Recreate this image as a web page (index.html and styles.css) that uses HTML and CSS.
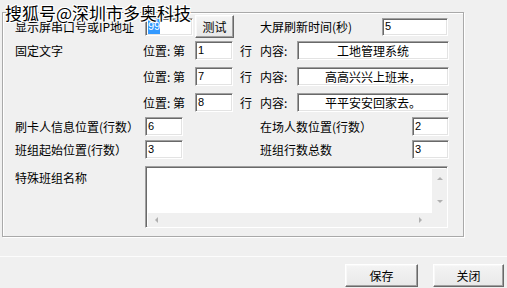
FILE: index.html
```html
<!DOCTYPE html>
<html lang="zh-CN">
<head>
<meta charset="utf-8">
<title>串口设置</title>
<link rel="stylesheet" href="styles.css">
</head>
<body>
<div class="dialog">
  <div class="group">
    <div class="row r0">
      <div class="lbl w130">显示屏串口号或IP地址</div>
      <div class="field port"><span class="sel">99</span></div>
      <div class="btn btn-test">测试</div>
      <div class="lbl lbl-refresh">大屏刷新时间(秒)</div>
      <div class="field refresh"><span class="num">5</span></div>
    </div>
    <div class="row r1">
      <div class="lbl w128">固定文字</div>
      <div class="lbl pos">位置:&nbsp;第</div>
      <div class="field line-no"><span class="num">1</span></div>
      <div class="lbl hang">行</div>
      <div class="lbl neirong">内容:</div>
      <div class="field content">工地管理系统</div>
    </div>
    <div class="row r2">
      <div class="lbl w128"></div>
      <div class="lbl pos">位置:&nbsp;第</div>
      <div class="field line-no"><span class="num">7</span></div>
      <div class="lbl hang">行</div>
      <div class="lbl neirong">内容:</div>
      <div class="field content">高高兴兴上班来，</div>
    </div>
    <div class="row r2">
      <div class="lbl w128"></div>
      <div class="lbl pos">位置:&nbsp;第</div>
      <div class="field line-no"><span class="num">8</span></div>
      <div class="lbl hang">行</div>
      <div class="lbl neirong">内容:</div>
      <div class="field content">平平安安回家去。</div>
    </div>
    <div class="row r4">
      <div class="lbl w130">刷卡人信息位置(行数）</div>
      <div class="field small"><span class="num">6</span></div>
      <div class="lbl lbl-right">在场人数位置(行数）</div>
      <div class="field small2"><span class="num">2</span></div>
    </div>
    <div class="row r5">
      <div class="lbl w130">班组起始位置(行数）</div>
      <div class="field small"><span class="num">3</span></div>
      <div class="lbl lbl-right">班组行数总数</div>
      <div class="field small2"><span class="num">3</span></div>
    </div>
    <div class="row r6">
      <div class="lbl w130 lbl-list">特殊班组名称</div>
      <div class="field list">
        <div class="list-body"></div>
        <div class="vscroll">
          <svg width="16" height="10" viewBox="0 0 16 10"><polygon points="5,7 11,7 8,4" fill="#b0b0b0"/></svg>
          <svg width="16" height="10" viewBox="0 0 16 10"><polygon points="5,3 11,3 8,6" fill="#b0b0b0"/></svg>
        </div>
        <div class="hscroll">
          <svg width="10" height="14" viewBox="0 0 10 14"><polygon points="7,4 7,10 4,7" fill="#b0b0b0"/></svg>
          <svg width="10" height="14" viewBox="0 0 10 14"><polygon points="3,4 3,10 6,7" fill="#b0b0b0"/></svg>
        </div>
        <div class="corner"></div>
      </div>
    </div>
  </div>
  <div class="sep"></div>
  <div class="actions">
    <div class="btn btn-save">保存</div>
    <div class="btn btn-close">关闭</div>
  </div>
  <div class="watermark">搜狐号@深圳市多奥科技</div>
</div>
</body>
</html>
```

FILE: styles.css
```css
html, body {
  margin: 0;
  padding: 0;
  background: #f0f0f0;
}

.dialog {
  position: relative;
  width: 507px;
  height: 288px;
  overflow: hidden;
  background: #f0f0f0;
  font-family: "Noto Sans CJK SC", "Liberation Sans", sans-serif;
  font-size: 12px;
  line-height: 14px;
  color: #000;
}

.group {
  box-sizing: border-box;
  margin: 12px 0 0 2px;
  width: 462px;
  height: 225px;
  border: 1px solid #a9a9a9;
  box-shadow: 1px 1px 0 #fff, inset 1px 1px 0 #fff;
}

.row {
  display: flex;
  align-items: center;
  margin-left: 12px;
}

.r0 { margin-top: 2px; height: 23px; }
.r1 { margin-top: 3px; height: 19px; }
.r2 { margin-top: 7px; height: 19px; }
.r4 { margin-top: 5px; height: 19px; }
.r5 { margin-top: 4px; height: 19px; }
.r6 { margin-top: 7px; height: 62px; align-items: flex-start; }

.lbl {
  white-space: nowrap;
  flex: none;
}

.w130 { width: 130px; }
.w128 { width: 128px; }
.lbl-refresh { margin-left: 26px; width: 122px; }
.pos { width: 52px; }
.hang { margin-left: 7px; width: 20px; }
.neirong { width: 37px; }
.lbl-right { margin-left: 77px; width: 152px; }
.lbl-list { padding-top: 5px; }

.field {
  box-sizing: border-box;
  flex: none;
  background: #fff;
  border-style: solid;
  border-width: 1px;
  border-color: #a0a0a0 #fff #fff #a0a0a0;
  box-shadow: inset 1px 1px 0 #696969, inset -1px -1px 0 #e3e3e3;
  display: flex;
  align-items: center;
  padding-left: 2px;
}

.num, .sel {
  font-family: "Liberation Sans", "DejaVu Sans", sans-serif;
  font-size: 11px;
  line-height: 13px;
}

.sel {
  background: #3399ff;
  color: #fff;
  padding: 1px 0;
}

.port { width: 48px; height: 18px; }
.refresh { width: 66px; height: 18px; }
.line-no { width: 38px; height: 19px; }
.content {
  width: 152px;
  height: 19px;
  justify-content: center;
  padding-left: 0;
}
.small { width: 38px; height: 19px; }
.small2 { width: 37px; height: 19px; }

.list {
  width: 303px;
  height: 62px;
  padding: 2px 0 0 2px;
  display: grid;
  grid-template-columns: 1fr 15px;
  grid-template-rows: 1fr 14px;
  align-items: stretch;
}

.list-body { background: #fff; }

.vscroll {
  background: #f0f0f0;
  display: flex;
  flex-direction: column;
  justify-content: space-between;
  padding: 4px 0 6px;
}

.hscroll {
  background: #f0f0f0;
  display: flex;
  justify-content: space-between;
  padding: 0 6px 0 3px;
}

.vscroll svg, .hscroll svg { display: block; }

.corner { background: #f0f0f0; }

.btn {
  box-sizing: border-box;
  flex: none;
  display: flex;
  align-items: center;
  justify-content: center;
  background: linear-gradient(#f4f4f4, #e8e8e8);
  border: 1px solid;
  border-color: #fff #696969 #696969 #fff;
  box-shadow: inset -1px -1px 0 #a0a0a0, inset 1px 1px 0 #f8f8f8;
  white-space: nowrap;
}

.btn-test { margin-left: 2px; width: 39px; height: 23px; }

.sep {
  margin-top: 19px;
  height: 0;
  border-top: 1px solid #fcfcfc;
}

.actions {
  display: flex;
  margin: 7px 0 0 345px;
}

.btn-save { width: 73px; height: 23px; }
.btn-close { margin-left: 15px; width: 71px; height: 23px; }

.watermark {
  position: absolute;
  left: 5px;
  top: 2px;
  font-size: 17px;
  line-height: 21px;
  font-weight: normal;
  color: #000;
  white-space: nowrap;
  text-shadow:
    1px 0 0 #fff, -1px 0 0 #fff, 0 1px 0 #fff, 0 -1px 0 #fff,
    1px 1px 0 #fff, -1px -1px 0 #fff, 1px -1px 0 #fff, -1px 1px 0 #fff;
}
```
